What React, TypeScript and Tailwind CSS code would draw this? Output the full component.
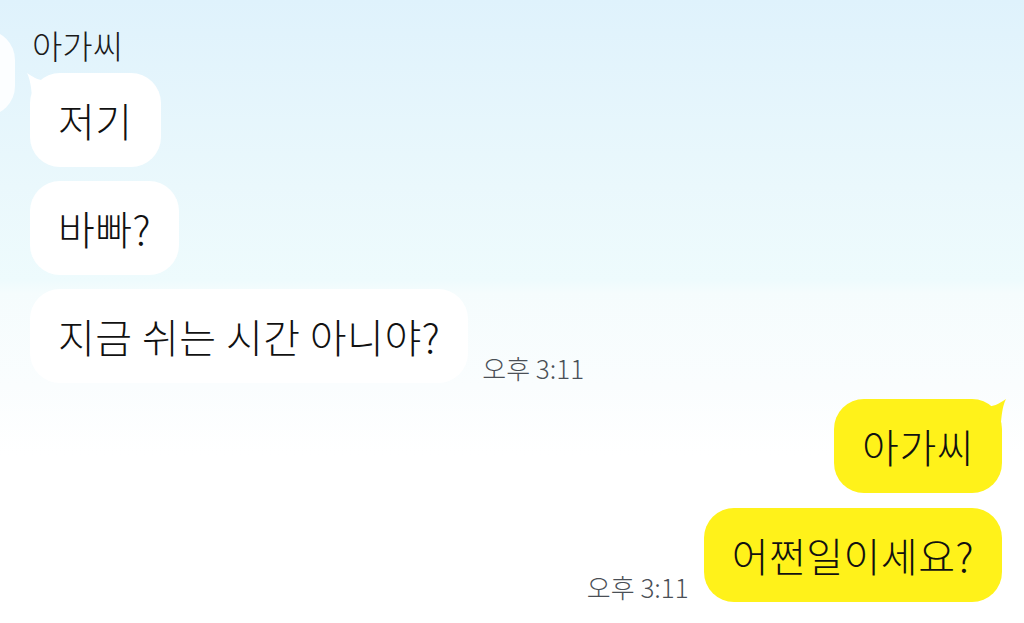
const font = { fontFamily: '"Noto Sans CJK KR", "Noto Sans", sans-serif' };

function LeftTail() {
  return (
    <svg className="absolute -left-[4px] -top-[1px]" width="30" height="26" viewBox="0 0 30 26">
      <path d="M1 1 C8 6 14 9 24 9 L28 24 L6 24 C5 14 4 7 1 1 Z" fill="#ffffff" />
    </svg>
  );
}

function RightTail() {
  return (
    <svg className="absolute -right-[5px] -top-[1px]" width="30" height="26" viewBox="0 0 30 26">
      <path d="M29 1 C22 6 16 9 6 9 L2 24 L24 24 C25 14 26 7 29 1 Z" fill="#fff21a" />
    </svg>
  );
}

function Bubble({ text, mine, tail }: { text: string; mine?: boolean; tail?: boolean }) {
  return (
    <div
      className={`relative rounded-[30px] px-[28px] py-[22px] text-[40px] font-light leading-[50px] tracking-[0.5px] text-[#111] ${
        mine ? 'bg-[#fff21a]' : 'bg-white'
      }`}
    >
      {tail && (mine ? <RightTail /> : <LeftTail />)}
      <span className="relative">{text}</span>
    </div>
  );
}

function Time() {
  return (
    <span className="mb-[1px] whitespace-nowrap text-[26px] font-light leading-[28px] text-[#4a4f56]">
      오후 3:11
    </span>
  );
}

export default function App() {
  return (
    <div
      style={font}
      className="h-[623px] w-[1024px] overflow-hidden bg-[linear-gradient(180deg,#dff2fc_0%,#eaf8fc_30%,#eefbfd_45%,#f5fcfd_47%,#fafdfe_62%,#ffffff_73%,#ffffff_100%)]"
    >
      <div className="flex gap-[15px] pt-[25px]">
        <div className="-ml-[60px] mt-[5px] h-[86px] w-[75px] shrink-0 rounded-[30px] bg-white/90" />
        <div className="flex flex-col items-start">
          <div className="pl-[2px] text-[33px] font-light leading-[40px] text-[#1a1a1a]">아가씨</div>
          <div className="mt-[8px] flex flex-col items-start gap-[14px]">
            <Bubble text="저기" tail />
            <Bubble text="바빠?" />
            <div className="flex items-end gap-[14px]">
              <Bubble text="지금 쉬는 시간 아니야?" />
              <Time />
            </div>
          </div>
        </div>
      </div>
      <div className="mt-[16px] flex flex-col items-end gap-[15px] pr-[22px]">
        <Bubble text="아가씨" mine tail />
        <div className="flex items-end gap-[15px]">
          <Time />
          <Bubble text="어쩐일이세요?" mine />
        </div>
      </div>
    </div>
  );
}
